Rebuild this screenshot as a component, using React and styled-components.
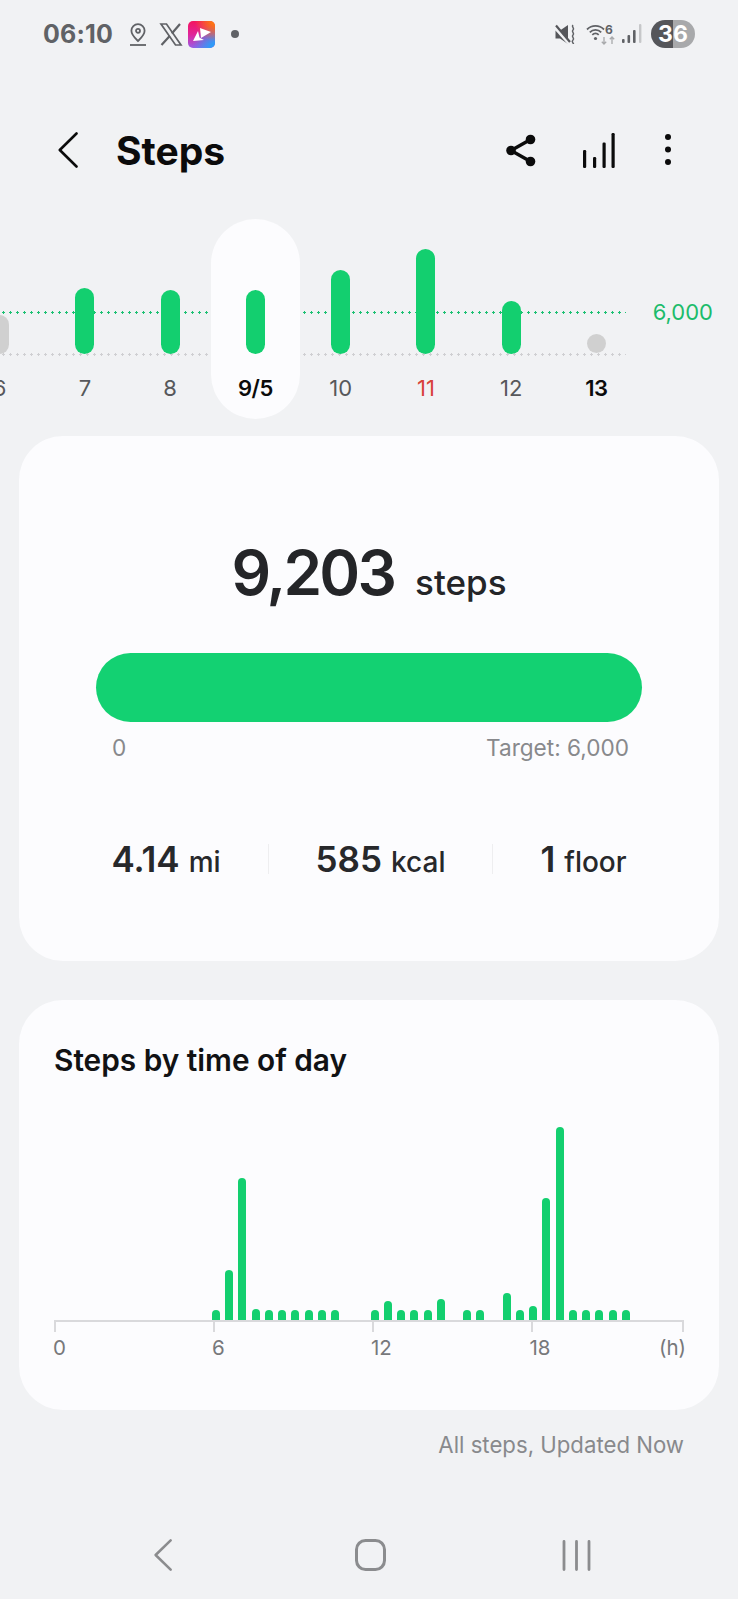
import React from "react";
import styled, { createGlobalStyle } from "styled-components";

const Global = createGlobalStyle`
  html, body { margin: 0; padding: 0; background: #f1f2f4; }
  body { font-family: Inter, "Noto Sans", sans-serif; }
  * { box-sizing: border-box; }
`;

const Page = styled.div`
  width: 738px;
  height: 1599px;
  overflow: hidden;
  background: #f1f2f4;
  display: flex;
  flex-direction: column;
`;

const StatusBar = styled.div`
  height: 68px;
  padding: 0 43px;
  display: flex;
  align-items: center;
  justify-content: space-between;
  color: #606266;
`;
const StatusGroup = styled.div`
  display: flex;
  align-items: center;
`;
const Time = styled.span`
  font-size: 25px;
  font-weight: 700;
  letter-spacing: 0.2px;
  margin-right: 16px;
`;
const NotifDot = styled.span`
  width: 8px;
  height: 8px;
  border-radius: 50%;
  background: #606266;
  margin-left: 16px;
`;
const Battery = styled.div`
  width: 44px;
  height: 28px;
  border-radius: 14px;
  margin-left: 9px;
  background: linear-gradient(90deg, #55565a 0 50%, #a8a9ab 50% 100%);
  color: #fff;
  font-size: 23px;
  font-weight: 700;
  display: flex;
  align-items: center;
  justify-content: center;
`;
const Icon = styled.svg`
  flex: none;
  margin-left: ${(p) => p.$ml || 0}px;
`;

const Header = styled.div`
  height: 128px;
  margin-top: 18px;
  margin-bottom: 5px;
  padding: 0 0 0 58px;
  display: flex;
  align-items: center;
`;
const Title = styled.h1`
  margin: 0 0 0 38px;
  font-size: 39px;
  font-weight: 700;
  color: #0b0b0b;
  flex: 1;
`;
const HeaderActions = styled.div`
  display: flex;
  align-items: center;
  padding-right: 67px;
`;

const Strip = styled.div`
  position: relative;
  height: 200px;
`;
const Guide = styled.div`
  position: absolute;
  left: 0;
  width: 626px;
  height: 3px;
  top: ${(p) => p.$top}px;
  background-image: radial-gradient(circle, ${(p) => p.$color} 1px, transparent 1.3px);
  background-size: 7px 3px;
`;
const GoalLabel = styled.span`
  position: absolute;
  right: 25px;
  top: 79px;
  font-size: 22px;
  line-height: 28px;
  color: #1cbc6b;
`;
const DayRow = styled.div`
  position: relative;
  display: flex;
  margin-left: -43px;
  width: 730px;
`;
const DayCol = styled.div`
  width: ${(p) => (p.$active ? "88.5px" : "85.25px")};
  margin: ${(p) => (p.$active ? "0 -1.6px" : "0")};
  height: 200px;
  border-radius: 44.5px;
  background: ${(p) => (p.$active ? "#fcfcfe" : "transparent")};
  display: flex;
  flex-direction: column;
  align-items: center;
  position: relative;
`;
const BarSlot = styled.div`
  height: 135px;
  display: flex;
  align-items: flex-end;
`;
const DayBar = styled.div`
  width: 19px;
  border-radius: 9.5px;
  background: ${(p) => (p.$muted ? "#d0d0d0" : "#13cf6f")};
  margin-bottom: ${(p) => p.$lift || 0}px;
`;
const DayLabel = styled.span`
  margin-top: 20px;
  font-size: 22px;
  line-height: 28px;
  font-weight: ${(p) => (p.$strong ? 600 : 400)};
  letter-spacing: ${(p) => (p.$strong ? "-0.4px" : "0")};
  color: ${(p) => p.$color || "#57585b"};
`;

const Card = styled.section`
  margin: 0 19px;
  background: #fcfcfe;
  border-radius: 44px;
`;
const SummaryCard = styled(Card)`
  margin-top: 17px;
  height: 525px;
  padding: 98px 77px 0;
`;
const BigRow = styled.div`
  display: flex;
  justify-content: center;
  align-items: baseline;
  gap: 21px;
  height: 78px;
  color: #242528;
`;
const BigNumber = styled.span`
  font-size: 62px;
  line-height: 78px;
  font-weight: 600;
  letter-spacing: -2.8px;
`;
const BigUnit = styled.span`
  font-size: 35px;
  font-weight: 500;
`;
const Progress = styled.div`
  margin-top: 41px;
  height: 69px;
  border-radius: 35px;
  background: #13d172;
`;
const ProgressLabels = styled.div`
  margin-top: 12px;
  padding: 0 13px 0 16px;
  display: flex;
  justify-content: space-between;
  font-size: 22.6px;
  line-height: 28px;
  color: #88898c;
`;
const Stats = styled.div`
  margin-top: 75px;
  display: flex;
  justify-content: center;
  align-items: center;
  gap: 47px;
  color: #27282b;
`;
const Stat = styled.div`
  display: flex;
  align-items: baseline;
  gap: 9px;
  white-space: nowrap;
`;
const StatValue = styled.span`
  font-size: 35px;
  line-height: 44px;
  font-weight: 600;
`;
const StatUnit = styled.span`
  font-size: 28px;
  font-weight: 500;
`;
const StatDivider = styled.span`
  width: 1px;
  height: 30px;
  background: #eeeef0;
`;

const TimeCard = styled(Card)`
  margin-top: 39px;
  height: 410px;
  padding: 40px 35px 0;
`;
const CardTitle = styled.h2`
  margin: 0;
  font-size: 29.8px;
  line-height: 40px;
  font-weight: 600;
  color: #111214;
`;
const Plot = styled.div`
  margin-top: 47px;
  height: 193px;
  display: flex;
  align-items: flex-end;
  padding-left: 158px;
  gap: 5.23px;
`;
const HourBar = styled.div`
  width: 8px;
  flex: none;
  border-radius: 4px 4px 0 0;
  background: ${(p) => (p.$empty ? "transparent" : "#13cf6f")};
`;
const Axis = styled.div`
  width: 630px;
  height: 12px;
  border-top: 2px solid #d9d9dc;
  display: flex;
`;
const AxisTick = styled.div`
  width: ${(p) => p.$w}px;
  flex: none;
  border-left: 2px solid #d9d9dc;
`;
const AxisEnd = styled.div`
  flex: 1;
  border-left: 2px solid #d9d9dc;
  border-right: 2px solid #d9d9dc;
`;
const AxisLabels = styled.div`
  margin: 3px 0 0 -1px;
  width: 631px;
  display: flex;
  font-size: 20.5px;
  line-height: 26px;
  color: #77787b;
`;
const AxisLabel = styled.span`
  width: ${(p) => p.$w}px;
  flex: none;
`;
const AxisUnit = styled.span`
  flex: 1;
  text-align: right;
  margin-right: -2px;
`;
const Footnote = styled.div`
  margin-top: 21px;
  padding-right: 54px;
  text-align: right;
  font-size: 22.2px;
  line-height: 28px;
  color: #88898c;
`;
const NavBar = styled.nav`
  margin-top: 80px;
  padding-left: 154px;
  display: flex;
  align-items: center;
`;

const Pin = () => (
  <Icon width="18" height="23" viewBox="0 0 18 23" fill="none" stroke="#606266" strokeWidth="1.8">
    <path d="M9 1.2a6.6 6.6 0 0 0-6.6 6.6C2.4 12 6.5 15.6 9 18c2.5-2.4 6.6-6 6.6-10.2A6.6 6.6 0 0 0 9 1.2Z" />
    <circle cx="9" cy="7.8" r="2" />
    <path d="M1 22h16" />
  </Icon>
);
const XLogo = () => (
  <Icon $ml={12} width="24" height="23" viewBox="0 0 24 23" fill="none" stroke="#606266" strokeWidth="1.7">
    <path d="M2 1h5.5l14.5 21h-5.500Z" />
    <path d="M21 1l-8.200 9.500M10.700 13 2.500 22" strokeWidth="2.200" />
  </Icon>
);
const AppIcon = () => (
  <Icon $ml={5} width="27" height="27" viewBox="0 0 27 27">
    <defs>
      <linearGradient id="appBase" x1="0" y1="0" x2="0" y2="1">
        <stop offset="0" stopColor="#f4155f" />
        <stop offset="0.5" stopColor="#e0259a" />
        <stop offset="1" stopColor="#9a5de6" />
      </linearGradient>
      <radialGradient id="appOrange" cx="1" cy="0" r="0.75">
        <stop offset="0" stopColor="#ff8a00" />
        <stop offset="1" stopColor="#ff8a00" stopOpacity="0" />
      </radialGradient>
      <radialGradient id="appBlue" cx="1" cy="1" r="0.85">
        <stop offset="0.2" stopColor="#2f9bf7" />
        <stop offset="1" stopColor="#2f9bf7" stopOpacity="0" />
      </radialGradient>
    </defs>
    <rect width="27" height="27" rx="5" fill="url(#appBase)" />
    <rect width="27" height="27" rx="5" fill="url(#appBlue)" />
    <rect width="27" height="27" rx="5" fill="url(#appOrange)" />
    <path d="M12 7 23 11 13 17Z" fill="#fff" />
    <path d="M10 10 5 20l11-1-3-1.500-1.500-1Z" fill="#fff" />
  </Icon>
);
const Mute = () => (
  <Icon width="21" height="21" viewBox="0 0 21 21" fill="none">
    <path d="M0.500 6.500h4.500l8-5.500v19l-8-5.500H0.500Z" fill="#55565a" />
    <path d="M0 3.500 14 19" stroke="#f1f2f4" strokeWidth="3.500" />
    <path d="M1 1.500 15 18" stroke="#55565a" strokeWidth="2.200" />
    <path d="M18 1c-2.200 2 2.200 3 0 5s2.200 3 0 5 2.200 3 0 5 0.500 2.500 0.500 4" stroke="#606266" strokeWidth="1.500" />
  </Icon>
);
const Wifi = () => (
  <Icon $ml={10} width="30" height="22" viewBox="0 0 30 22" fill="none" stroke="#606266">
    <path d="M1 6.500A12 12 0 0 1 18 6.500" strokeWidth="1.800" />
    <path d="M3.800 9.300A8 8 0 0 1 15.200 9.300" strokeWidth="1.800" />
    <path d="M6.300 11.800A4.500 4.500 0 0 1 12.700 11.800" strokeWidth="1.800" />
    <circle cx="9.500" cy="15.500" r="1.600" fill="#606266" stroke="none" />
    <path d="M18 14v7m-2.200-2.200 2.200 2.200 2.200-2.200" stroke="#a8a9ab" strokeWidth="1.300" />
    <path d="M26 21v-7m-2.200 2.200 2.200-2.200 2.200 2.200" stroke="#a8a9ab" strokeWidth="1.300" />
    <text x="19" y="10.500" fontSize="12" fontWeight="700" fontFamily="Inter, sans-serif" fill="#606266" stroke="none">6</text>
  </Icon>
);
const Signal = () => (
  <Icon $ml={6} width="20" height="20" viewBox="0 0 20 20">
    <rect x="0" y="15" width="2.600" height="4" rx="1" fill="#606266" />
    <rect x="5.500" y="11" width="2.600" height="8" rx="1" fill="#606266" />
    <rect x="11" y="6" width="2.600" height="13" rx="1" fill="#606266" />
    <rect x="17" y="0" width="2.400" height="19" rx="1" fill="#c6c7c9" />
  </Icon>
);
const BackIcon = ({ color = "#0b0b0b", w = 20, h = 36, sw = 2.6 }) => (
  <Icon width={w} height={h} viewBox="0 0 20 36" fill="none" stroke={color} strokeWidth={sw} strokeLinecap="round" strokeLinejoin="round" preserveAspectRatio="none">
    <path d="M18.500 1.500 1.800 18l16.700 16.500" />
  </Icon>
);
const ShareIcon = () => (
  <Icon width="30" height="33" viewBox="0 0 30 33" fill="#0b0b0b" stroke="#0b0b0b">
    <path d="M24.500 5.500 5 16.500l19.500 11" fill="none" strokeWidth="3.500" />
    <circle cx="24.500" cy="5.500" r="4.800" stroke="none" />
    <circle cx="5" cy="16.500" r="4.800" stroke="none" />
    <circle cx="24.500" cy="27.500" r="4.800" stroke="none" />
  </Icon>
);
const BarsIcon = () => (
  <Icon $ml={47} width="32" height="35" viewBox="0 0 32 35" fill="#0b0b0b">
    <rect x="0" y="17" width="3.200" height="18" rx="1.200" />
    <rect x="10" y="24" width="3.200" height="11" rx="1.200" />
    <rect x="19.500" y="9.500" width="3.200" height="25.500" rx="1.200" />
    <rect x="28.500" y="0" width="3.200" height="35" rx="1.200" />
  </Icon>
);
const KebabIcon = () => (
  <Icon $ml={50} width="6" height="32" viewBox="0 0 6 32" fill="#0b0b0b">
    <circle cx="3" cy="3" r="3" />
    <circle cx="3" cy="15.500" r="3" />
    <circle cx="3" cy="28" r="3" />
  </Icon>
);
const HomeIcon = () => (
  <Icon $ml={183} width="31" height="32" viewBox="0 0 31 32" fill="none" stroke="#8b8c8e" strokeWidth="3">
    <rect x="1.500" y="1.500" width="28" height="29" rx="9" />
  </Icon>
);
const RecentsIcon = () => (
  <Icon $ml={176} width="29" height="31" viewBox="0 0 29 31" fill="none" stroke="#8b8c8e" strokeWidth="2.800" strokeLinecap="round">
    <path d="M2 1.500v28M14.500 1.500v28M27 1.500v28" />
  </Icon>
);

const days = [
  { label: "6", h: 39, muted: true },
  { label: "7", h: 66 },
  { label: "8", h: 64 },
  { label: "9/5", h: 64, active: true },
  { label: "10", h: 84 },
  { label: "11", h: 105, color: "#d8433b" },
  { label: "12", h: 53 },
  { label: "13", h: 19, muted: true, lift: 1, today: true },
];

const hourTops = {
  0: 1310, 1: 1270, 2: 1178, 3: 1309, 4: 1310, 5: 1310, 6: 1310, 7: 1310, 8: 1310, 9: 1310,
  12: 1310, 13: 1301, 14: 1310, 15: 1310, 16: 1310, 17: 1299, 19: 1310, 20: 1310,
  22: 1293, 23: 1310, 24: 1306, 25: 1198, 26: 1127, 27: 1310, 28: 1310, 29: 1310, 30: 1310, 31: 1310,
};
const hours = Array.from({ length: 32 }, (_, k) => k);

export default function App() {
  return (
    <Page>
      <Global />
      <StatusBar>
        <StatusGroup>
          <Time>06:10</Time>
          <Pin />
          <XLogo />
          <AppIcon />
          <NotifDot />
        </StatusGroup>
        <StatusGroup>
          <Mute />
          <Wifi />
          <Signal />
          <Battery>36</Battery>
        </StatusGroup>
      </StatusBar>

      <Header>
        <BackIcon />
        <Title>Steps</Title>
        <HeaderActions>
          <ShareIcon />
          <BarsIcon />
          <KebabIcon />
        </HeaderActions>
      </Header>

      <Strip>
        <Guide $top={92} $color="#1cc072" />
        <Guide $top={134} $color="#cfcfd2" />
        <GoalLabel>6,000</GoalLabel>
        <DayRow>
          {days.map((d) => (
            <DayCol key={d.label} $active={d.active}>
              <BarSlot>
                <DayBar $muted={d.muted} $lift={d.lift} style={{ height: d.h }} />
              </BarSlot>
              <DayLabel $strong={d.active || d.today} $color={d.active || d.today ? "#0b0b0b" : d.color}>
                {d.label}
              </DayLabel>
            </DayCol>
          ))}
        </DayRow>
      </Strip>

      <SummaryCard>
        <BigRow>
          <BigNumber>9,203</BigNumber>
          <BigUnit>steps</BigUnit>
        </BigRow>
        <Progress />
        <ProgressLabels>
          <span>0</span>
          <span>Target: 6,000</span>
        </ProgressLabels>
        <Stats>
          <Stat>
            <StatValue>4.14</StatValue>
            <StatUnit>mi</StatUnit>
          </Stat>
          <StatDivider />
          <Stat>
            <StatValue>585</StatValue>
            <StatUnit>kcal</StatUnit>
          </Stat>
          <StatDivider />
          <Stat>
            <StatValue>1</StatValue>
            <StatUnit>floor</StatUnit>
          </Stat>
        </Stats>
      </SummaryCard>

      <TimeCard>
        <CardTitle>Steps by time of day</CardTitle>
        <Plot>
          {hours.map((k) =>
            hourTops[k] ? (
              <HourBar key={k} style={{ height: 1320 - hourTops[k] }} />
            ) : (
              <HourBar key={k} $empty />
            )
          )}
        </Plot>
        <Axis>
          <AxisTick $w={159} />
          <AxisTick $w={159} />
          <AxisTick $w={158.5} />
          <AxisEnd />
        </Axis>
        <AxisLabels>
          <AxisLabel $w={159}>0</AxisLabel>
          <AxisLabel $w={159}>6</AxisLabel>
          <AxisLabel $w={158.5}>12</AxisLabel>
          <AxisLabel $w={100}>18</AxisLabel>
          <AxisUnit>(h)</AxisUnit>
        </AxisLabels>
      </TimeCard>

      <Footnote>All steps, Updated Now</Footnote>

      <NavBar>
        <BackIcon color="#8b8c8e" w={18} h={32} sw={2.8} />
        <HomeIcon />
        <RecentsIcon />
      </NavBar>
    </Page>
  );
}
